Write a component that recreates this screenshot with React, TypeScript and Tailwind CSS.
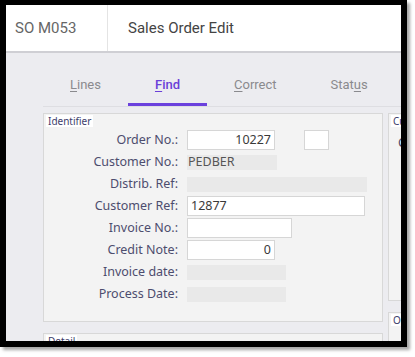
import React from 'react'

const label = "text-[12.5px] text-[#4d4d6e] text-right w-[143px] pr-[9px] shrink-0 leading-none"

function Row({ name, children }: { name: string; children: React.ReactNode }) {
  return (
    <div className="flex items-center h-[22px]">
      <div className={label}>{name}</div>
      {children}
    </div>
  )
}

function Input({ w, value, right }: { w: string; value?: string; right?: boolean }) {
  return (
    <div className={`${w} h-[20px] bg-white border border-[#d6d6d6] flex items-center px-[3px] text-[12.5px] text-[#3a3a3a] ${right ? 'justify-end' : ''}`}>
      {value}
    </div>
  )
}

function ReadOnly({ w, value }: { w: string; value?: string }) {
  return (
    <div className={`${w} h-[15px] bg-[#e9e9e9] flex items-center px-[1px] text-[12.5px] text-[#555]`}>
      {value}
    </div>
  )
}

function Legend({ text }: { text: string }) {
  return (
    <div className="absolute left-[2px] top-[1px] bg-white px-[2px] h-[12px] flex items-center text-[10px] text-[#3d3d6b] leading-none">
      {text}
    </div>
  )
}

export default function App() {
  const tabs = [
    { pre: '', u: 'L', post: 'ines' },
    { pre: '', u: 'F', post: 'ind', active: true },
    { pre: '', u: 'C', post: 'orrect' },
    { pre: 'Stat', u: 'u', post: 's' },
  ]
  return (
    <div className="w-[415px] h-[357px] bg-white" style={{ fontFamily: '"Noto Sans", Roboto, sans-serif' }}>
      <div className="w-[407px] h-[347px] border-black border-l-[6px] border-r-[6px] border-t-[5px] border-b-[6px] shadow-[3px_3px_3px_rgba(0,0,0,0.35)] overflow-hidden flex flex-col">
        {/* header */}
        <div className="h-[48px] shrink-0 flex bg-white border-b-2 border-[#cfcfd4]" style={{ fontFamily: 'Roboto, sans-serif' }}>
          <div className="w-[102px] border-r border-[#e4e4e4] flex items-center pl-[9px] text-[15px] text-[#666]">SO M053</div>
          <div className="flex items-center pl-[20px] text-[15px] text-[#444]">Sales Order Edit</div>
        </div>
        {/* body */}
        <div className="flex-1 bg-[#ececf0] pl-[37px] overflow-hidden">
          <div className="flex h-[54px] border-b border-[#dedee2] w-[400px]" style={{ fontFamily: 'Roboto, sans-serif' }}>
            {tabs.map((t, i) => (
              <div key={i} className={`px-[27px] flex items-center pt-[10px] text-[13px] relative ${t.active ? 'text-[#6a3fd8] font-medium' : 'text-[#8a8a8e]'}`}>
                <span>{t.pre}<span className="underline underline-offset-2">{t.u}</span>{t.post}</span>
                {t.active && <div className="absolute left-0 right-0 bottom-0 h-[3px] bg-[#6b41dd]" />}
              </div>
            ))}
          </div>
          <div className="flex gap-[5px] mt-[6px] w-[420px]">
            <div className="flex flex-col gap-[11px]">
              <div className="relative w-[340px] h-[209px] bg-[#f3f3f3] border border-[#d8d8d8] pt-[15px]">
                <Legend text="Identifier" />
                <Row name="Order No.:">
                  <Input w="w-[88px]" value="10227" right />
                  <div className="ml-[29px] w-[25px] h-[20px] bg-white border border-[#d6d6d6]" />
                </Row>
                <Row name="Customer No.:"><ReadOnly w="w-[90px]" value="PEDBER" /></Row>
                <Row name="Distrib. Ref:"><ReadOnly w="w-[180px]" /></Row>
                <Row name="Customer Ref:"><Input w="w-[178px]" value="12877" /></Row>
                <Row name="Invoice No.:"><Input w="w-[105px]" /></Row>
                <Row name="Credit Note:"><Input w="w-[88px]" value="0" right /></Row>
                <Row name="Invoice date:"><ReadOnly w="w-[99px]" /></Row>
                <Row name="Process Date:"><ReadOnly w="w-[99px]" /></Row>
              </div>
              <div className="relative w-[340px] h-[40px] bg-[#f3f3f3] border border-[#d8d8d8]">
                <Legend text="Detail" />
              </div>
            </div>
            <div className="flex flex-col gap-[11px]">
              <div className="relative w-[60px] h-[188px] bg-[#f3f3f3] border border-[#d8d8d8]">
                <Legend text="Cu" />
                <div className="absolute left-[9px] top-[20px] text-[12.5px] text-[#4d4d6e]">C</div>
              </div>
              <div className="relative w-[60px] h-[60px] bg-[#f3f3f3] border border-[#d8d8d8]">
                <Legend text="Or" />
              </div>
            </div>
          </div>
        </div>
      </div>
    </div>
  )
}
